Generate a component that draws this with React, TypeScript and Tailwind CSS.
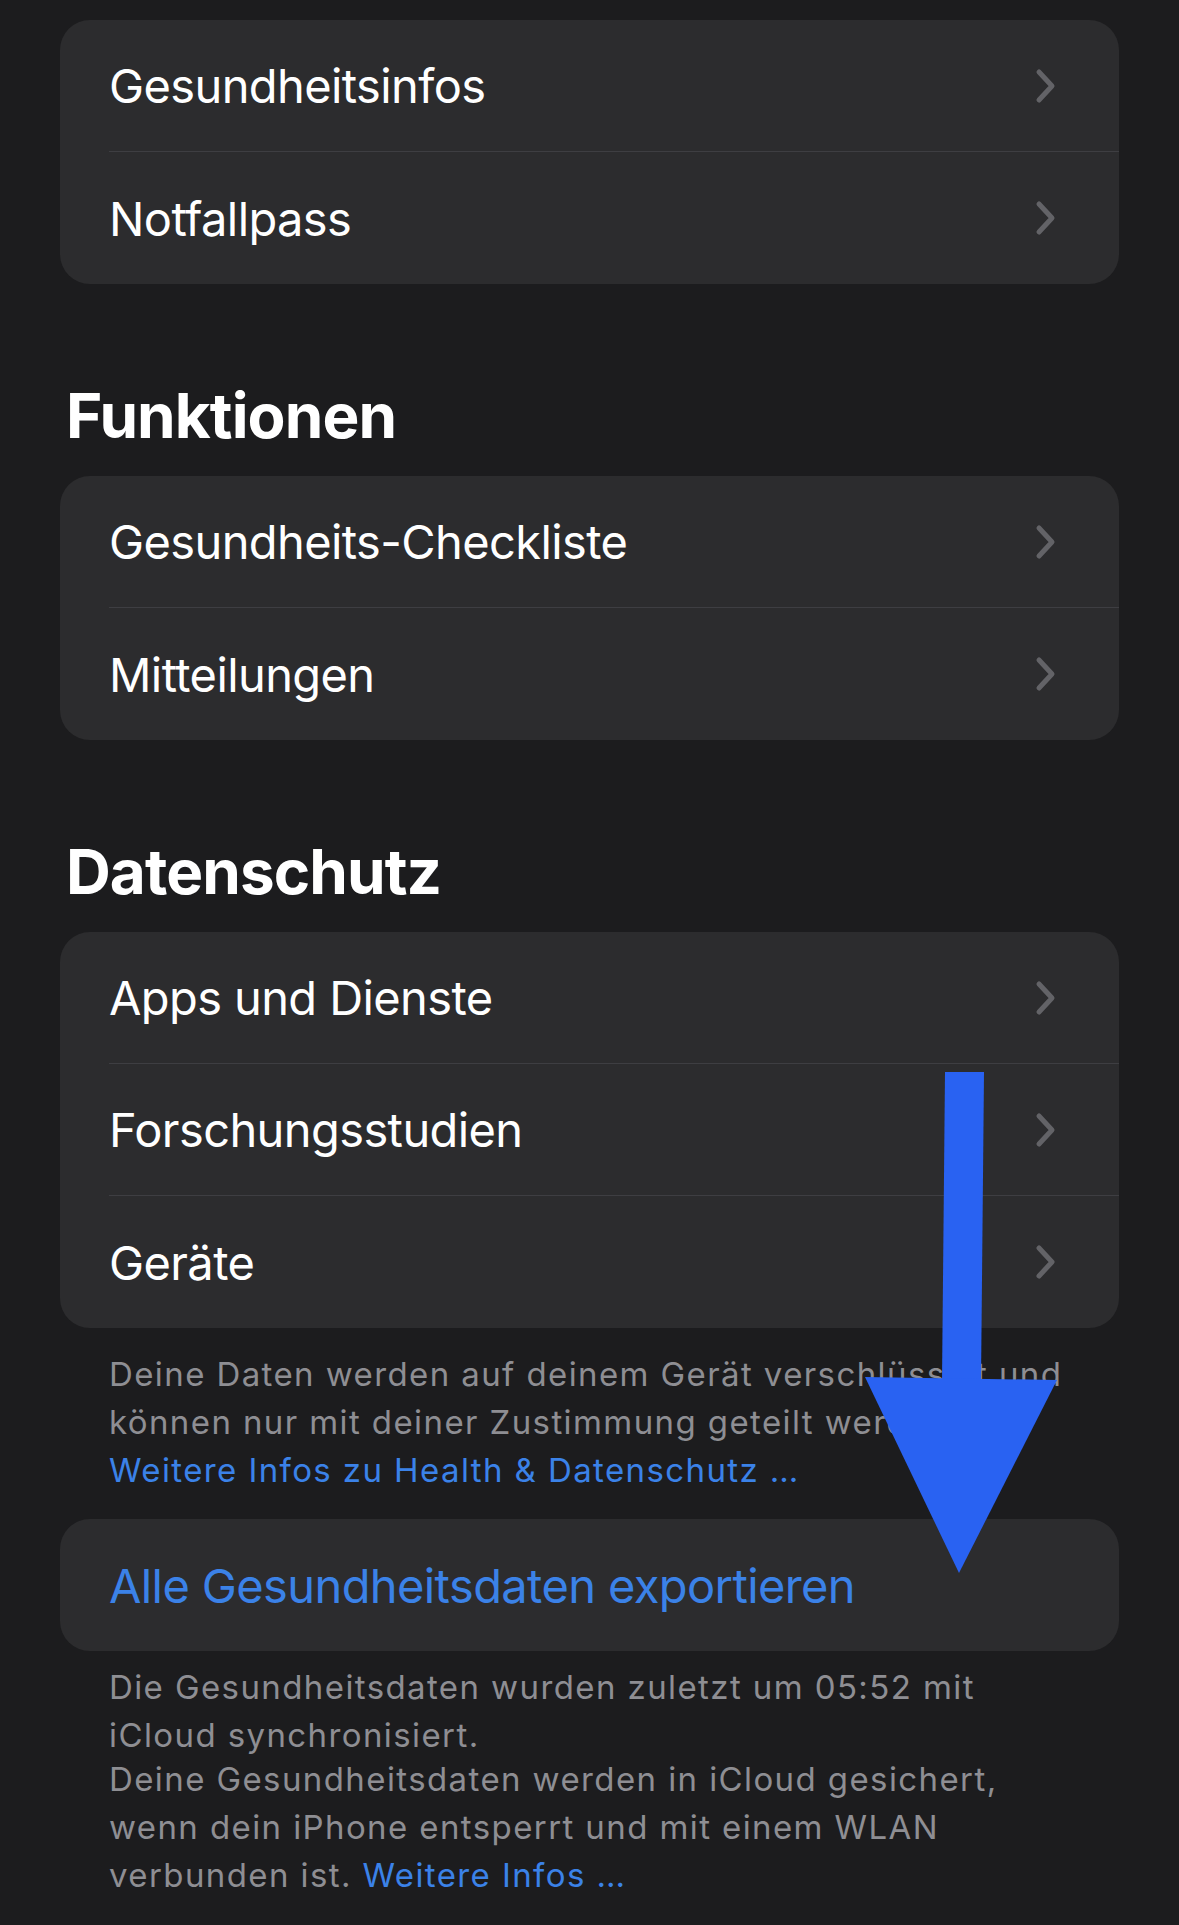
import React from "react";

type RowProps = { label: string; last?: boolean };

function Chevron() {
  return (
    <svg width="22" height="36" viewBox="0 0 22 36" className="shrink-0">
      <polyline
        points="4,4 17,18 4,32"
        fill="none"
        stroke="#636367"
        strokeWidth="5"
        strokeLinecap="round"
        strokeLinejoin="round"
      />
    </svg>
  );
}

function Row({ label, last }: RowProps) {
  return (
    <div className="pl-[49px]">
      <div
        className={
          "h-[132px] flex items-center justify-between pr-[62px] " +
          (last ? "" : "border-b border-[#3e3e42]")
        }
      >
        <span className="text-[47px] leading-none tracking-[-0.6px] text-white">{label}</span>
        <Chevron />
      </div>
    </div>
  );
}

function Card({ items }: { items: string[] }) {
  return (
    <div className="bg-[#2c2c2e] rounded-[30px] overflow-hidden">
      {items.map((item, i) => (
        <Row key={item} label={item} last={i === items.length - 1} />
      ))}
    </div>
  );
}

function Heading({ children }: { children: React.ReactNode }) {
  return (
    <h2 className="mt-[101px] mb-[29px] pl-[6px] text-[62px] leading-none font-bold tracking-[-0.9px] text-white">
      {children}
    </h2>
  );
}

export default function App() {
  return (
    <div className="relative min-h-[1925px] bg-[#1c1c1e] font-[Inter,sans-serif] overflow-hidden">
      <div className="px-[60px] pt-[20px]">
        <Card items={["Gesundheitsinfos", "Notfallpass"]} />

        <Heading>Funktionen</Heading>
        <Card items={["Gesundheits-Checkliste", "Mitteilungen"]} />

        <Heading>Datenschutz</Heading>
        <Card items={["Apps und Dienste", "Forschungsstudien", "Geräte"]} />

        {/* footer under privacy card */}
        <div className="pl-[49px] pt-[22px] text-[33px] leading-[48px] tracking-[1.4px] text-[#8e8e93]">
          <p>Deine Daten werden auf deinem Gerät verschlüsselt und</p>
          <p>können nur mit deiner Zustimmung geteilt werden.</p>
          <p className="text-[#3b82e8]">Weitere Infos zu Health &amp; Datenschutz …</p>
        </div>

        <div className="mt-[25px] bg-[#2c2c2e] rounded-[30px] h-[132px] flex items-center pl-[49px]">
          <span className="text-[47px] leading-none tracking-[-0.6px] text-[#3b82e8]">
            Alle Gesundheitsdaten exportieren
          </span>
        </div>

        <div className="pl-[49px] pt-[12px] text-[33px] leading-[48px] tracking-[1.4px] text-[#8e8e93]">
          <p>Die Gesundheitsdaten wurden zuletzt um 05:52 mit</p>
          <p>iCloud synchronisiert.</p>
          <p className="mt-[-4px]">Deine Gesundheitsdaten werden in iCloud gesichert,</p>
          <p>wenn dein iPhone entsperrt und mit einem WLAN</p>
          <p>
            verbunden ist. <span className="text-[#3b82e8]">Weitere Infos …</span>
          </p>
        </div>
      </div>

      {/* annotation arrow drawn over the page */}
      <svg
        className="absolute left-0 top-0 pointer-events-none"
        width="1179"
        height="1925"
        viewBox="0 0 1179 1925"
      >
        <polygon points="945,1072 984,1072 981,1382 942,1382" fill="#2962f2" />
        <polygon points="865,1377 1057,1380 959,1573" fill="#2962f2" />
      </svg>
    </div>
  );
}
